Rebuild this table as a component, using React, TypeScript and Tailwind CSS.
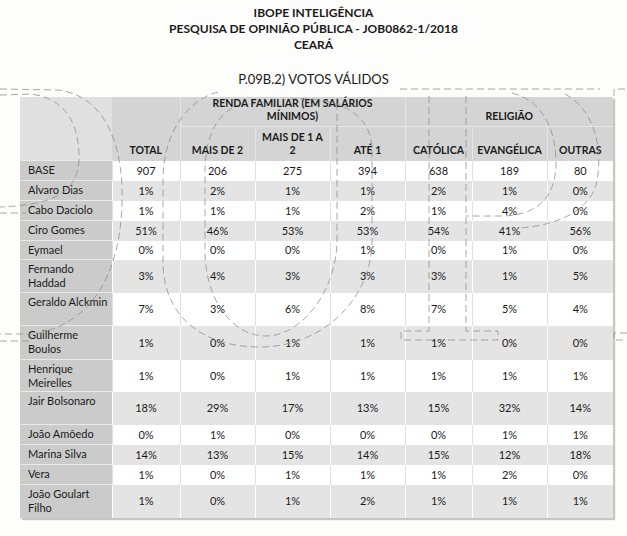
import React from 'react';

const rows: [string[], string[], number][] = [
  [['BASE'], ['907', '206', '275', '394', '638', '189', '80'], 20],
  [['Alvaro Dias'], ['1%', '2%', '1%', '1%', '2%', '1%', '0%'], 20],
  [['Cabo Daciolo'], ['1%', '1%', '1%', '2%', '1%', '4%', '0%'], 20],
  [['Ciro Gomes'], ['51%', '46%', '53%', '53%', '54%', '41%', '56%'], 20],
  [['Eymael'], ['0%', '0%', '0%', '1%', '0%', '1%', '0%'], 19],
  [['Fernando', 'Haddad'], ['3%', '4%', '3%', '3%', '3%', '1%', '5%'], 33],
  [['Geraldo Alckmin'], ['7%', '3%', '6%', '8%', '7%', '5%', '4%'], 33],
  [['Guilherme', 'Boulos'], ['1%', '0%', '1%', '1%', '1%', '0%', '0%'], 34],
  [['Henrique', 'Meirelles'], ['1%', '0%', '1%', '1%', '1%', '1%', '1%'], 32],
  [['Jair Bolsonaro'], ['18%', '29%', '17%', '13%', '15%', '32%', '14%'], 33],
  [['João Amôedo'], ['0%', '1%', '0%', '0%', '0%', '1%', '1%'], 20],
  [['Marina Silva'], ['14%', '13%', '15%', '14%', '15%', '12%', '18%'], 20],
  [['Vera'], ['1%', '0%', '1%', '1%', '1%', '2%', '0%'], 20],
  [['João Goulart', 'Filho'], ['1%', '0%', '1%', '2%', '1%', '1%', '1%'], 33],
];

// dashed watermark drawn over the page
const Watermark = () => (
  <svg
    className="absolute inset-0 pointer-events-none"
    width="627"
    height="536"
    viewBox="0 0 627 536"
    fill="none"
    stroke="#8c8c8c"
    strokeWidth="1"
    strokeDasharray="7 4"
    opacity="0.75"
  >
    {/* left D shapes */}
    <path d="M0 89 L58 90 C108 96 124 150 122 205 C120 265 98 322 35 334 L0 334" />
    <path d="M0 341 L32 341" />
    <path d="M0 95 L30 94 C68 98 80 128 79 160 C77 190 58 205 0 207" />
    <path d="M0 213 L26 213" />
    {/* middle U shapes */}
    <path d="M218 92 C188 100 163 132 163 180 L163 262 C163 318 205 348 262 347 C322 346 372 300 372 240 L372 150 C372 112 335 96 290 99" />
    <path d="M232 108 C213 120 205 142 205 172 L205 250 C205 300 232 336 266 336 C302 336 337 290 337 240 L337 98" />
    {/* right columns and bracket */}
    <path d="M429 96 L429 331 L401 331 L401 340 L498 340 L498 331 L466 331 L466 96" />
    <path d="M627 333 L614 333 L614 340 L627 340" />
    {/* right top P shape */}
    <path d="M400 89 L600 89" />
    <path d="M614 96 L614 89 L627 89" />
    <path d="M512 93 C540 100 555 125 556 160 C557 195 540 214 505 216 L466 216" />
    <path d="M565 94 C595 110 604 150 596 185 C588 210 560 225 520 228" />
  </svg>
);

export default function App() {
  return (
    <div
      className="relative w-[627px] h-[536px] bg-[#fdfdfc] text-[#1a1a1a] overflow-hidden"
      style={{ fontFamily: 'Lato, "Open Sans", sans-serif' }}
    >
      <div className="pt-[5px] flex flex-col items-center font-bold text-[12px] leading-[16px]">
        <div>IBOPE INTELIGÊNCIA</div>
        <div>PESQUISA DE OPINIÃO PÚBLICA - JOB0862-1/2018</div>
        <div>CEARÁ</div>
      </div>
      <div className="mt-[18px] text-center text-[13px] leading-[16px]">P.09B.2) VOTOS VÁLIDOS</div>

      <div className="pl-[20px] mt-[10px]">
        <table className="table-fixed border-collapse w-[593px] shadow-[2px_2px_1px_rgba(0,0,0,0.22)]">
          <colgroup>
            <col className="w-[92px]" />
            <col className="w-[68px]" />
            <col className="w-[75px]" />
            <col className="w-[75px]" />
            <col className="w-[75px]" />
            <col className="w-[67px]" />
            <col className="w-[75px]" />
            <col className="w-[66px]" />
          </colgroup>
          <thead className="text-[10.5px] font-bold leading-[13px]">
            <tr>
              <th rowSpan={2} className="bg-[#e0e0e0] p-0" />
              <th rowSpan={2} className="bg-[#d4d4d4] align-bottom pb-[4px] h-[33px]">TOTAL</th>
              <th colSpan={3} className="bg-[#d4d4d4] align-bottom pb-[3px] border-l border-b border-[#e6e6e6]">
                RENDA FAMILIAR (EM SALÁRIOS
                <br />
                MÍNIMOS)
              </th>
              <th colSpan={3} className="bg-[#d4d4d4] align-bottom pb-[3px] border-l border-b border-[#e6e6e6]">
                RELIGIÃO
              </th>
            </tr>
            <tr>
              {[['MAIS DE 2'], ['MAIS DE 1 A', '2'], ['ATÉ 1'], ['CATÓLICA'], ['EVANGÉLICA'], ['OUTRAS']].map((h, i) => (
                <th key={i} className="bg-[#d4d4d4] align-bottom pb-[4px] h-[34px] border-l border-[#e6e6e6] font-bold">
                  {h.map((l, j) => (
                    <div key={j}>{l}</div>
                  ))}
                </th>
              ))}
            </tr>
          </thead>
          <tbody className="text-[11px]">
            {rows.map(([label, values, h], r) => {
              const gray = r % 2 === 1;
              return (
                <tr key={r}>
                  <td
                    className="bg-[#cbcbcb] align-top pl-[8px] pt-[2px] leading-[14px] whitespace-nowrap border-t border-[#e9e9e9]"
                    style={{ height: h }}
                  >
                    {label.map((l, j) => (
                      <div key={j}>{l}</div>
                    ))}
                  </td>
                  {values.map((v, i) => (
                    <td
                      key={i}
                      className={
                        gray
                          ? 'bg-[#e4e4e4] text-center align-middle leading-[14px] border-l border-white'
                          : 'bg-white text-center align-middle leading-[14px] border-l border-[#e0e0e0]'
                      }
                    >
                      {v}
                    </td>
                  ))}
                </tr>
              );
            })}
          </tbody>
        </table>
      </div>

      <Watermark />
    </div>
  );
}
